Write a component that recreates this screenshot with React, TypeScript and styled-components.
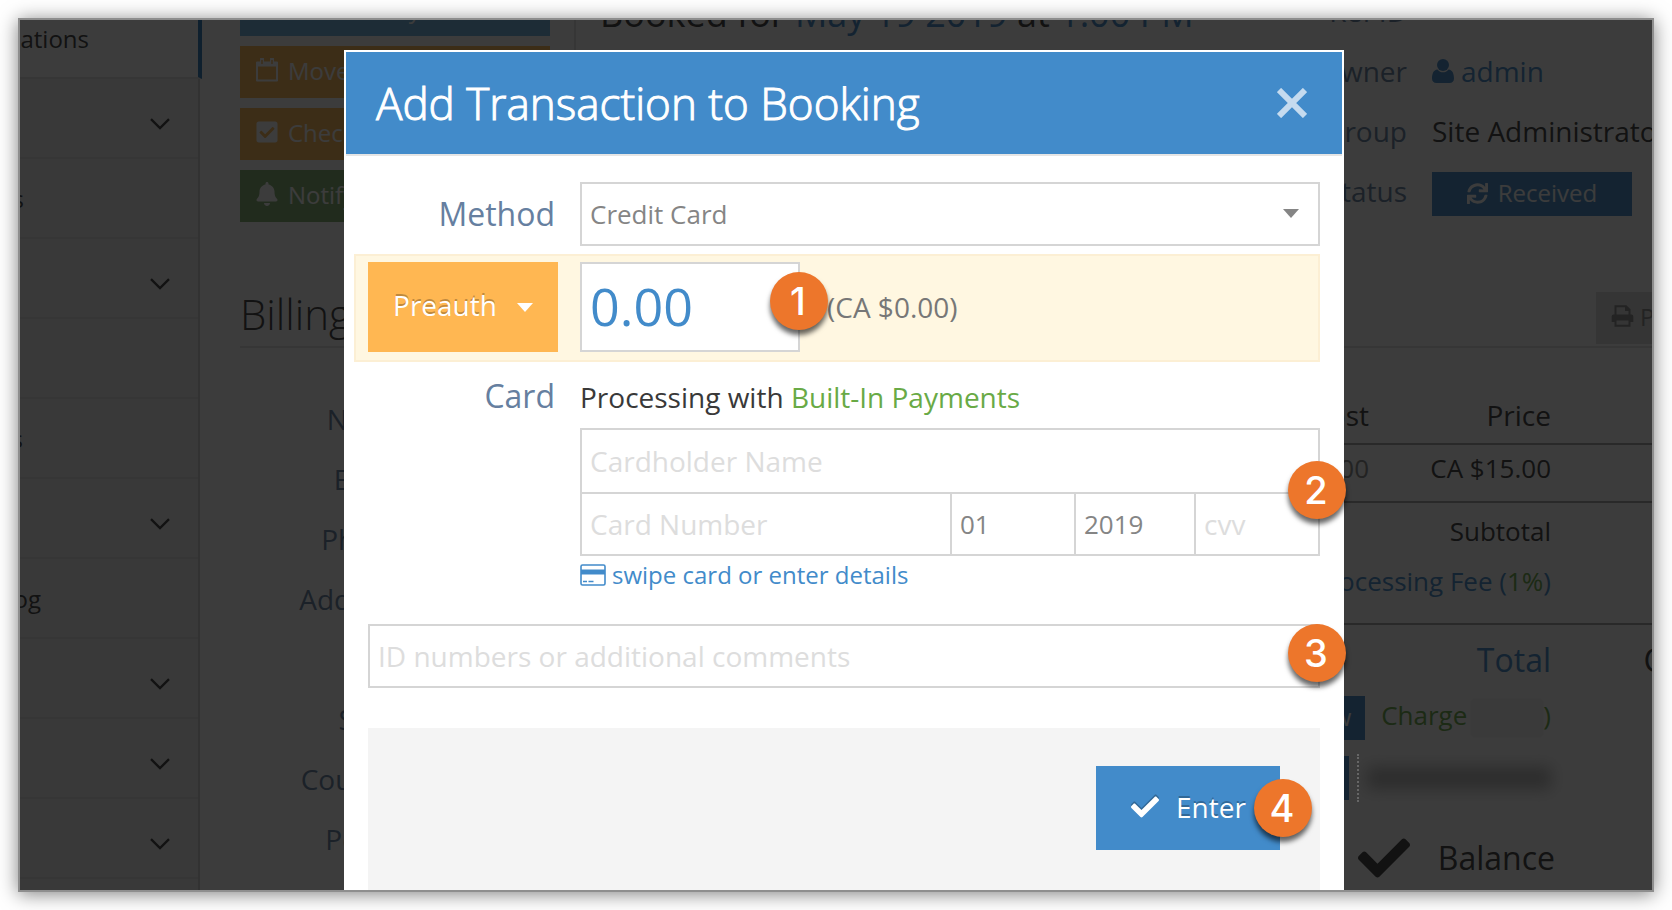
import React from "react";
import styled, { createGlobalStyle } from "styled-components";
import { FaBell, FaCheck, FaCheckSquare, FaSync } from "react-icons/fa";

const color = {
  primary: "#428bca",
  label: "#667fa0",
  text: "#393939",
  green: "#69aa46",
  orange: "#ffb752",
  border: "#d5d5d5",
  line: "#e2e2e2",
};

const GlobalStyle = createGlobalStyle`
  *, *::before, *::after { box-sizing: border-box; }
  body {
    margin: 0;
    background: #fff;
    color: ${color.text};
    font-family: "Open Sans", "Noto Sans", sans-serif;
    font-size: 28px;
  }
  button, input, select { font: inherit; border-radius: 0; margin: 0; }
  a { color: ${color.primary}; text-decoration: none; }
`;

const Page = styled.div`
  height: 100vh;
  padding: 18px;
`;

const Frame = styled.div`
  position: relative;
  height: 100%;
  overflow: hidden;
  display: flex;
  border: 2px solid #8e8e8e;
  box-shadow: 0 2px 18px rgba(0, 0, 0, 0.5);
  white-space: nowrap;
`;

/* ---------- sidebar ---------- */

const Sidebar = styled.nav`
  position: relative;
  z-index: 1;
  flex: 0 0 180px;
  margin-top: -21px;
  background: #f2f2f2;
  border-right: 2px solid #cfcfcf;
`;

const NavItem = styled.a<{ $active?: boolean }>`
  display: flex;
  align-items: center;
  justify-content: space-between;
  height: 80px;
  margin-right: ${(p) => (p.$active ? "-4px" : "0")};
  padding-right: 28px;
  border-bottom: 2px solid ${color.line};
  border-right: ${(p) => (p.$active ? "4px solid #2b7dbc" : "0")};
  background: ${(p) => (p.$active ? "#fff" : "transparent")};
  color: ${color.text};
  font-size: 24px;
  svg { margin-top: 12px; }
`;

const NavLabel = styled.span<{ $width: number }>`
  display: flex;
  justify-content: flex-end;
  width: ${(p) => p.$width}px;
`;

/* ---------- booking page ---------- */

const Main = styled.main`
  flex: 1 0 auto;
  width: calc(100% - 30px);
  padding-left: 40px;
  background: #fff;
`;

const Summary = styled.section`
  display: flex;
  height: 202px;
`;

const Actions = styled.div`
  flex: 0 0 310px;
  display: flex;
  flex-direction: column;
  gap: 10px;
  margin-top: -36px;
`;

const Action = styled.button<{ $bg: string; $indent?: number }>`
  display: flex;
  align-items: center;
  gap: 8px;
  height: 52px;
  padding: 0 14px 4px ${(p) => p.$indent ?? 14}px;
  border: 0;
  background: ${(p) => p.$bg};
  color: #fff;
  font-size: 24px;
  svg { flex: 0 0 26px; }
`;

const Headline = styled.h1`
  flex: 1;
  margin: 0 0 0 24px;
  padding-left: 24px;
  border-left: 2px solid ${color.line};
  font-size: 36px;
  font-weight: 400;
  line-height: 50px;
  > span { display: block; margin-top: -31px; }
`;

const Details = styled.dl`
  flex: 0 0 483px;
  display: grid;
  grid-template-columns: 88px 1fr;
  column-gap: 25px;
  grid-auto-rows: 60px;
  margin: -39px 0 0;
  line-height: 60px;
`;

const Term = styled.dt`
  color: ${color.label};
  text-align: right;
`;

const Detail = styled.dd<{ $top?: number }>`
  display: flex;
  align-items: center;
  margin: 0;
  padding-top: ${(p) => p.$top ?? 0}px;
  a { display: flex; align-items: center; gap: 7px; }
`;

const BlueButton = styled.button<{ $width: number }>`
  display: inline-flex;
  align-items: center;
  justify-content: center;
  gap: 10px;
  width: ${(p) => p.$width}px;
  height: 44px;
  padding: 0 0 2px;
  border: 0;
  background: ${color.primary};
  color: #fff;
  font-size: 24px;
`;

const SectionHead = styled.header`
  display: flex;
  justify-content: space-between;
  height: 56px;
  margin-top: 70px;
  border-bottom: 2px solid ${color.line};
  h2 {
    margin: 0;
    font-size: 42px;
    font-weight: 300;
    line-height: 44px;
  }
`;

const PrintButton = styled.button`
  display: flex;
  align-items: center;
  gap: 6px;
  width: 206px;
  height: 52px;
  padding: 0 15px 4px;
  border: 0;
  background: #dcdcdc;
  color: #888;
  font-size: 24px;
`;

const Columns = styled.div`
  display: flex;
  justify-content: space-between;
  padding-top: 38px;
`;

const BillingLabels = styled.div`
  width: 165px;
  padding-top: 3px;
  color: ${color.label};
  line-height: 60px;
  text-align: right;
  span { display: block; height: 60px; }
`;

const Invoice = styled.table`
  width: 800px;
  table-layout: fixed;
  border-collapse: collapse;
  font-size: 26px;
  text-align: right;
  line-height: 32px;
  th, td { padding: 0 10px; font-weight: 400; }
`;

const InvoiceRow = styled.tr<{ $height: number; $top?: number; $bottom?: number; $line?: boolean; $size?: number }>`
  height: ${(p) => p.$height}px;
  font-size: ${(p) => p.$size ?? 26}px;
  border-bottom: ${(p) => (p.$line ? "2px solid #a5a5a5" : "0")};
  && > * {
    padding-top: ${(p) => p.$top ?? 0}px;
    padding-bottom: ${(p) => p.$bottom ?? 0}px;
  }
`;

const Positive = styled.span`
  color: ${color.green};
`;

const Muted = styled.td`
  color: #888;
`;

const Inline = styled.div<{ $gap: number; $outdent?: number }>`
  display: flex;
  align-items: center;
  justify-content: flex-end;
  gap: ${(p) => p.$gap}px;
  margin-right: -${(p) => p.$outdent ?? 0}px;
`;

const Redacted = styled.span`
  display: inline-block;
  vertical-align: middle;
  width: 72px;
  height: 38px;
  margin-left: 4px;
  border-radius: 4px;
  background: #f6f6f6;
  box-shadow: 0 0 3px #f0f0f0;
`;

const Smudge = styled.span`
  width: 184px;
  height: 22px;
  background: #b4b4b4;
  filter: blur(8px);
`;

const DottedRule = styled.span`
  position: relative;
  z-index: 2;
  height: 48px;
  border-left: 2px dotted #666;
`;

/* ---------- modal ---------- */

const Overlay = styled.div`
  position: absolute;
  z-index: 1;
  inset: 0;
  display: flex;
  justify-content: center;
  padding: 30px 0 0 16px;
  background: rgba(8, 8, 8, 0.79);
`;

const Modal = styled.div`
  flex: 0 1 1000px;
  border: 2px solid #fff;
  border-bottom: 0;
  background: #fff;
`;

const ModalHeader = styled.header`
  display: flex;
  align-items: center;
  justify-content: space-between;
  height: 104px;
  padding: 0 35px 0 30px;
  border-bottom: 2px solid #e5e5e5;
  background: ${color.primary};
  color: #fff;
  h2 {
    margin: 0;
    font-size: 44px;
    font-weight: 300;
    line-height: 60px;
    -webkit-text-stroke: 1px #fff;
  }
`;

const CloseButton = styled.button`
  display: flex;
  padding: 0;
  border: 0;
  background: none;
  color: #c5dbef;
`;

const Form = styled.form`
  padding: 26px 22px 0;
`;

const FieldRow = styled.div`
  display: grid;
  grid-template-columns: 190px 1fr;
  column-gap: 22px;
`;

const Label = styled.label<{ $line: number }>`
  padding-right: 3px;
  color: ${color.label};
  font-size: 32px;
  line-height: ${(p) => p.$line}px;
  text-align: right;
`;

const SelectWrap = styled.div`
  position: relative;
  svg { position: absolute; top: 27px; right: 21px; pointer-events: none; }
`;

const controlStyle = `
  display: block;
  width: 100%;
  height: 64px;
  padding: 0 8px;
  border: 2px solid ${color.border};
  background: #fff;
  outline: 0;
`;

const Select = styled.select`
  ${controlStyle}
  appearance: none;
  color: #858585;
  font-size: 26px;
`;

const Input = styled.input`
  ${controlStyle}
  color: #858585;
  font-size: 28px;
  &::placeholder { color: #ddd; opacity: 1; }
`;

const AmountRow = styled(FieldRow)`
  grid-template-columns: 190px auto 1fr;
  align-items: center;
  margin: 8px 0 0 -14px;
  padding: 6px 0 8px 12px;
  border: 2px solid #fcefd4;
  background: #fff7e1;
`;

const PreauthButton = styled.button`
  display: flex;
  align-items: center;
  justify-content: center;
  gap: 20px;
  height: 90px;
  padding-bottom: 6px;
  border: 0;
  background: ${color.orange};
  color: #fff;
  font-size: 28px;
  text-shadow: 0 -2px 0 rgba(0, 0, 0, 0.25);
  svg { margin-top: 6px; }
`;

const Anchor = styled.div`
  position: relative;
`;

const AmountInput = styled(Input)`
  width: 220px;
  height: 90px;
  padding-bottom: 4px;
  color: ${color.primary};
  font-size: 52px;
`;

const Converted = styled.span`
  padding-left: 5px;
  color: #777;
`;

const CardRow = styled(FieldRow)`
  padding-top: 10px;
`;

const Processing = styled.p`
  margin: 0 0 6px;
  line-height: 50px;
`;

const CardGrid = styled.div`
  position: relative;
  border: 2px solid ${color.border};
  > input { border: 0; height: 62px; }
`;

const CardNumbers = styled.div`
  display: grid;
  grid-template-columns: 368fr 124fr 120fr 124fr;
  border-top: 2px solid ${color.border};
  && > * { height: 60px; border-width: 0 0 0 2px; }
  && > :first-child { border-left-width: 0; }
`;

const SwipeLink = styled.a`
  display: flex;
  align-items: center;
  gap: 6px;
  font-size: 24px;
  line-height: 38px;
`;

const Comments = styled.div`
  position: relative;
  margin-top: 30px;
`;

const ModalFooter = styled.footer`
  display: flex;
  justify-content: flex-end;
  height: 400px;
  margin-top: 40px;
  padding: 38px 40px;
  background: #f4f4f4;
`;

const EnterButton = styled.button`
  position: relative;
  display: flex;
  align-items: center;
  gap: 17px;
  width: 184px;
  height: 84px;
  padding: 0 35px 2px;
  border: 0;
  background: ${color.primary};
  color: #fff;
  font-size: 28px;
  text-shadow: 0 -2px 0 rgba(0, 0, 0, 0.25);
  > svg { flex: 0 0 28px; filter: drop-shadow(0 -2px 0 rgba(0, 0, 0, 0.25)); }
`;

const Badge = styled.span<{ $top: number; $right: number }>`
  position: absolute;
  top: ${(p) => p.$top}px;
  right: ${(p) => p.$right}px;
  width: 58px;
  height: 58px;
  padding-right: 2px;
  border-radius: 50%;
  background: #ed762b;
  box-shadow: 0 5px 5px rgba(0, 0, 0, 0.6);
  color: #fff;
  font-family: Inter, "Liberation Sans", sans-serif;
  font-size: 38px;
  font-weight: 500;
  line-height: 58px;
  text-align: center;
  text-shadow: none;
`;

/* ---------- icons ---------- */

const ChevronIcon = () => (
  <svg width="20" height="12" viewBox="0 0 20 12" fill="none" stroke={color.text} strokeWidth="2.4">
    <path d="M1 1.2 10 10 19 1.2" />
  </svg>
);

const CalendarIcon = () => (
  <svg width="24" height="24" viewBox="0 0 24 24" fill="none" stroke="#fff">
    <path d="M2 4.5h20v18H2z" strokeWidth="2" strokeLinejoin="round" />
    <path d="M2 6.5h20" strokeWidth="4" />
    <path d="M7 1v5M17 1v5" strokeWidth="4" strokeLinecap="round" />
    <path d="M7 2v4M17 2v4" stroke={color.orange} strokeWidth="1.4" />
  </svg>
);

const UserIcon = () => (
  <svg width="22" height="24" viewBox="0 0 22 24" fill="currentColor">
    <circle cx="11" cy="6" r="6" />
    <path d="M5.4 10.4C1.5 10.8 0 14.500 0 19.500 0 22.300 1.800 24 4.500 24h13c2.700 0 4.500-1.700 4.500-4.500 0-5-1.500-8.700-5.400-9.100C15 12.300 13 13.300 11 13.300S7 12.300 5.400 10.400Z" />
  </svg>
);

const PrinterIcon = () => (
  <svg width="23" height="22" viewBox="0 0 23 22" fill="none" stroke="currentColor" strokeWidth="2">
    <path d="M4.500 10V1.200H15l3.500 3.500V10M15 1.200V5h3.500" />
    <path d="M2.500 9.500h18a1.800 1.800 0 0 1 1.800 1.800V17h-3.800v-3H4.500v3H.7v-5.700a1.800 1.800 0 0 1 1.800-1.800Z" fill="currentColor" stroke="none" />
    <path d="M4.500 14.500h14v6.300h-14z" />
  </svg>
);

const CaretIcon = ({ fill }: { fill: string }) => (
  <svg width="16" height="9" viewBox="0 0 16 9" fill={fill}>
    <path d="M0 0h16L8 9z" />
  </svg>
);

const CloseIcon = () => (
  <svg width="30" height="30" viewBox="0 0 30 30" stroke="currentColor" strokeWidth="6">
    <path d="M2 2l26 26M28 2 2 28" />
  </svg>
);

const CardIcon = () => (
  <svg width="26" height="22" viewBox="0 0 26 22" fill="none" stroke="currentColor">
    <rect x="1" y="1" width="24" height="20" rx="1.500" strokeWidth="1.600" />
    <path d="M1 8h24" strokeWidth="5" />
    <path d="M3 17.500h4M8.500 17.500h5" strokeWidth="1.600" />
  </svg>
);

/* ---------- data ---------- */

const navItems = [
  { label: "ations", width: 69, active: true },
  { chevron: true },
  { label: "s", width: 4 },
  { chevron: true },
  {},
  { label: "s", width: 3 },
  { chevron: true },
  { label: "og", width: 21 },
  { chevron: true },
  { chevron: true },
  { chevron: true },
  {},
];

const billingFields = ["Name", "Email", "Phone", "Address", "", "State", "Country", "Postal"];

export default function App() {
  return (
    <>
      <GlobalStyle />
      <Page>
        <Frame>
          <Sidebar>
            {navItems.map((item, i) => (
              <NavItem key={i} href="#" $active={item.active}>
                <NavLabel $width={item.width ?? 0}>{item.label}</NavLabel>
                {item.chevron && <ChevronIcon />}
              </NavItem>
            ))}
          </Sidebar>

          <Main>
            <Summary>
              <Actions>
                <Action $bg="#6fb3e0" $indent={104}>Modify</Action>
                <Action $bg={color.orange}><CalendarIcon />Move</Action>
                <Action $bg={color.orange}><FaCheckSquare size={24} />Check</Action>
                <Action $bg="#82af6f"><FaBell size={24} />Notify</Action>
              </Actions>
              <Headline>
                <span>
                  Booked for <a href="#">May 19 2019</a> at <a href="#">1:00 PM</a>
                </span>
              </Headline>
              <Details>
                <Term>Ref ID</Term>
                <Detail />
                <Term>Owner</Term>
                <Detail><a href="#"><UserIcon />admin</a></Detail>
                <Term>Group</Term>
                <Detail>Site Administrator</Detail>
                <Term>Status</Term>
                <Detail $top={6}><BlueButton $width={200}><FaSync size={21} />Received</BlueButton></Detail>
              </Details>
            </Summary>

            <SectionHead>
              <h2>Billing</h2>
              <PrintButton><PrinterIcon />Print</PrintButton>
            </SectionHead>

            <Columns>
              <BillingLabels>
                {billingFields.map((name, i) => <span key={i}>{name}</span>)}
              </BillingLabels>
              <Invoice>
                <colgroup>
                  <col />
                  <col width="200" />
                  <col width="182" />
                  <col width="241" />
                </colgroup>
                <thead>
                  <InvoiceRow $height={58} $line $size={28}>
                    <th /><th>Cost</th><th>Price</th><th />
                  </InvoiceRow>
                </thead>
                <tbody>
                  <InvoiceRow $height={58} $bottom={10} $line>
                    <td /><Muted>15.00</Muted><td>CA $15.00</td><td />
                  </InvoiceRow>
                </tbody>
                <tfoot>
                  <InvoiceRow $height={55} $top={2}>
                    <td colSpan={3}>Subtotal</td><td />
                  </InvoiceRow>
                  <InvoiceRow $height={67} $bottom={18} $line>
                    <td colSpan={3}><a href="#">Processing Fee (<Positive>1%</Positive>)</a></td><td />
                  </InvoiceRow>
                  <InvoiceRow $height={64} $top={7} $size={32}>
                    <td colSpan={3}><a href="#">Total</a></td><td>CA $15.15</td>
                  </InvoiceRow>
                  <InvoiceRow $height={60}>
                    <td colSpan={3}>
                      <Inline $gap={16}>
                        <BlueButton $width={80}>View</BlueButton>
                        <Positive>Charge<Redacted />)</Positive>
                      </Inline>
                    </td>
                    <td />
                  </InvoiceRow>
                  <InvoiceRow $height={60}>
                    <td colSpan={3}>
                      <Inline $gap={8}>
                        <BlueButton $width={60} aria-label="Void" />
                        <DottedRule />
                        <Smudge />
                      </Inline>
                    </td>
                    <td />
                  </InvoiceRow>
                  <InvoiceRow $height={100} $size={32}>
                    <td colSpan={3}>
                      <Inline $gap={28} $outdent={4}><FaCheck size={52} />Balance</Inline>
                    </td>
                    <td />
                  </InvoiceRow>
                </tfoot>
              </Invoice>
            </Columns>
          </Main>

          <Overlay>
            <Modal role="dialog" aria-modal="true" aria-labelledby="modal-title">
              <ModalHeader>
                <h2 id="modal-title">Add Transaction to Booking</h2>
                <CloseButton aria-label="Close"><CloseIcon /></CloseButton>
              </ModalHeader>
              <Form onSubmit={(e) => e.preventDefault()}>
                <FieldRow>
                  <Label htmlFor="method" $line={64}>Method</Label>
                  <SelectWrap>
                    <Select id="method" defaultValue="Credit Card">
                      <option>Credit Card</option>
                    </Select>
                    <CaretIcon fill="#858585" />
                  </SelectWrap>
                </FieldRow>

                <AmountRow>
                  <PreauthButton type="button">Preauth <CaretIcon fill="#fff" /></PreauthButton>
                  <Anchor>
                    <AmountInput aria-label="Amount" defaultValue="0.00" />
                    <Badge $top={10} $right={-28}>1</Badge>
                  </Anchor>
                  <Converted>(CA $0.00)</Converted>
                </AmountRow>

                <CardRow>
                  <Label htmlFor="cardholder" $line={48}>Card</Label>
                  <div>
                    <Processing>Processing with <Positive>Built-In Payments</Positive></Processing>
                    <CardGrid>
                      <Input id="cardholder" placeholder="Cardholder Name" />
                      <CardNumbers>
                        <Input aria-label="Card number" placeholder="Card Number" />
                        <Select aria-label="Expiry month"><option>01</option></Select>
                        <Select aria-label="Expiry year"><option>2019</option></Select>
                        <Input aria-label="Security code" placeholder="cvv" />
                      </CardNumbers>
                      <Badge $top={31} $right={-28}>2</Badge>
                    </CardGrid>
                    <SwipeLink href="#"><CardIcon />swipe card or enter details</SwipeLink>
                  </div>
                </CardRow>

                <Comments>
                  <Input aria-label="Comments" placeholder="ID numbers or additional comments" />
                  <Badge $top={0} $right={-26}>3</Badge>
                </Comments>

                <ModalFooter>
                  <EnterButton type="submit">
                    <FaCheck size={28} />Enter
                    <Badge $top={13} $right={-32}>4</Badge>
                  </EnterButton>
                </ModalFooter>
              </Form>
            </Modal>
          </Overlay>
        </Frame>
      </Page>
    </>
  );
}
